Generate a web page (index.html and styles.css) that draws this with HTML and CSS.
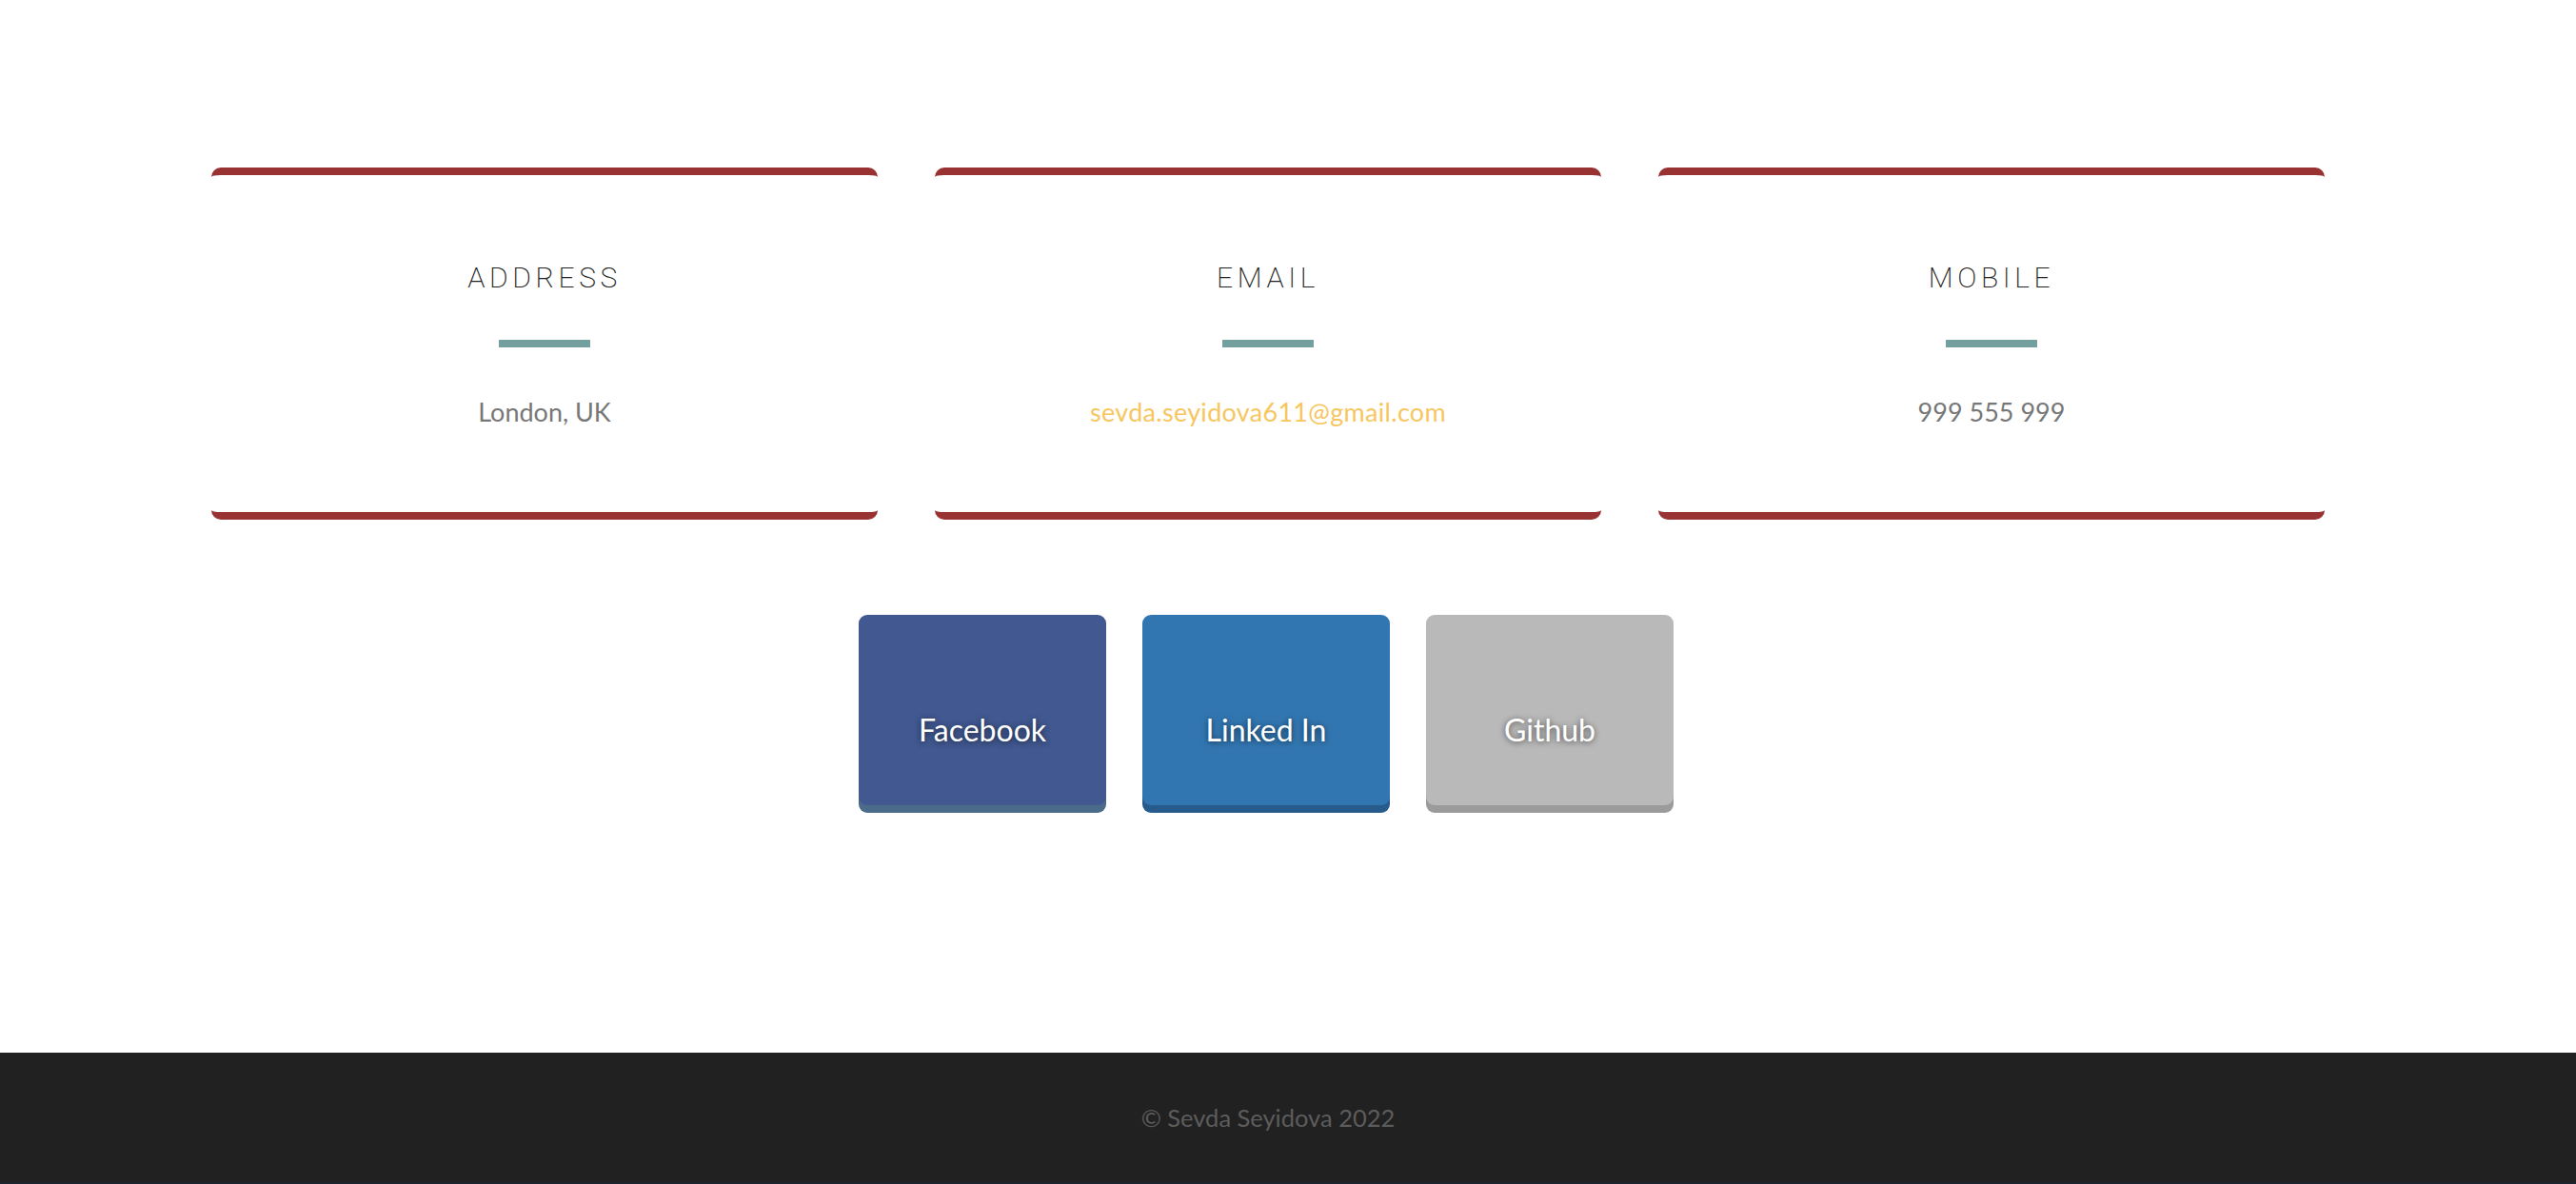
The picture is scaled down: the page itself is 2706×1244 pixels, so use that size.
FILE: index.html
```html
<!DOCTYPE html>
<html lang="en">
<head>
<meta charset="utf-8">
<title>Contact</title>
<link rel="stylesheet" href="styles.css">
</head>
<body>
<main class="contact">
  <section class="cards">
    <div class="card">
      <h3 class="card-title">ADDRESS</h3>
      <span class="card-line"></span>
      <p class="card-value">London, UK</p>
    </div>
    <div class="card">
      <h3 class="card-title">EMAIL</h3>
      <span class="card-line"></span>
      <p class="card-value"><a class="mail" href="#">sevda.seyidova611@gmail.com</a></p>
    </div>
    <div class="card">
      <h3 class="card-title">MOBILE</h3>
      <span class="card-line"></span>
      <p class="card-value">999 555 999</p>
    </div>
  </section>
  <nav class="socials">
    <a class="social facebook" href="#">Facebook</a>
    <a class="social linkedin" href="#">Linked In</a>
    <a class="social github" href="#">Github</a>
  </nav>
</main>
<footer class="footer">
  <p class="footer-text">© Sevda Seyidova 2022</p>
</footer>
</body>
</html>
```
FILE: styles.css
```css
html, body {
  margin: 0;
  padding: 0;
  background: #ffffff;
}

body {
  font-family: "Lato", "Noto Sans", sans-serif;
  width: 2706px;
  min-height: 1244px;
  display: flex;
  flex-direction: column;
}

.contact {
  padding-top: 176px;
  flex: 1;
}

.cards {
  display: grid;
  grid-template-columns: repeat(3, 700px);
  column-gap: 60px;
  margin-left: 222px;
  width: 2220px;
}

.card {
  box-sizing: border-box;
  height: 370px;
  border-top: 8px solid #993333;
  border-bottom: 8px solid #993333;
  border-radius: 10px;
  display: flex;
  flex-direction: column;
  align-items: center;
  text-align: center;
}

.card-title {
  margin: 93px 0 0;
  font-family: "Roboto", "Liberation Sans", sans-serif;
  font-weight: 200;
  font-size: 30px;
  line-height: 30px;
  letter-spacing: 4.6px;
  color: #222222;
}

.card-line {
  display: block;
  width: 96px;
  height: 8px;
  margin-top: 50px;
  background: #739f9e;
}

.card-value {
  margin: 54px 0 0;
  font-size: 27px;
  line-height: 27px;
  color: #777777;
}

.mail {
  color: #f8c660;
  text-decoration: none;
  letter-spacing: 0.3px;
}

.socials {
  display: flex;
  justify-content: center;
  gap: 38px;
  margin: 100px 0 0 220px;
  width: 2220px;
}

.social {
  box-sizing: border-box;
  width: 260px;
  height: 200px;
  padding-top: 40px;
  border-radius: 9px;
  display: flex;
  align-items: center;
  justify-content: center;
  color: #ffffff;
  font-size: 32px;
  text-decoration: none;
  text-shadow: 0 1px 6px rgba(0, 0, 0, 0.6);
}

.facebook {
  background: #415890;
  box-shadow: 0 8px 0 #4a6b89;
}

.linkedin {
  background: #3276b1;
  box-shadow: 0 8px 0 #265b8b;
}

.github {
  background: #b9b9b9;
  box-shadow: 0 8px 0 #9b9b9b;
}

.footer {
  box-sizing: border-box;
  height: 138px;
  background: #212121;
  border-bottom: 2px solid #1c2331;
  display: flex;
  align-items: center;
  justify-content: center;
  padding-right: 42px;
}

.footer-text {
  margin: 0;
  font-size: 25.5px;
  color: #5c5c5c;
}
```
